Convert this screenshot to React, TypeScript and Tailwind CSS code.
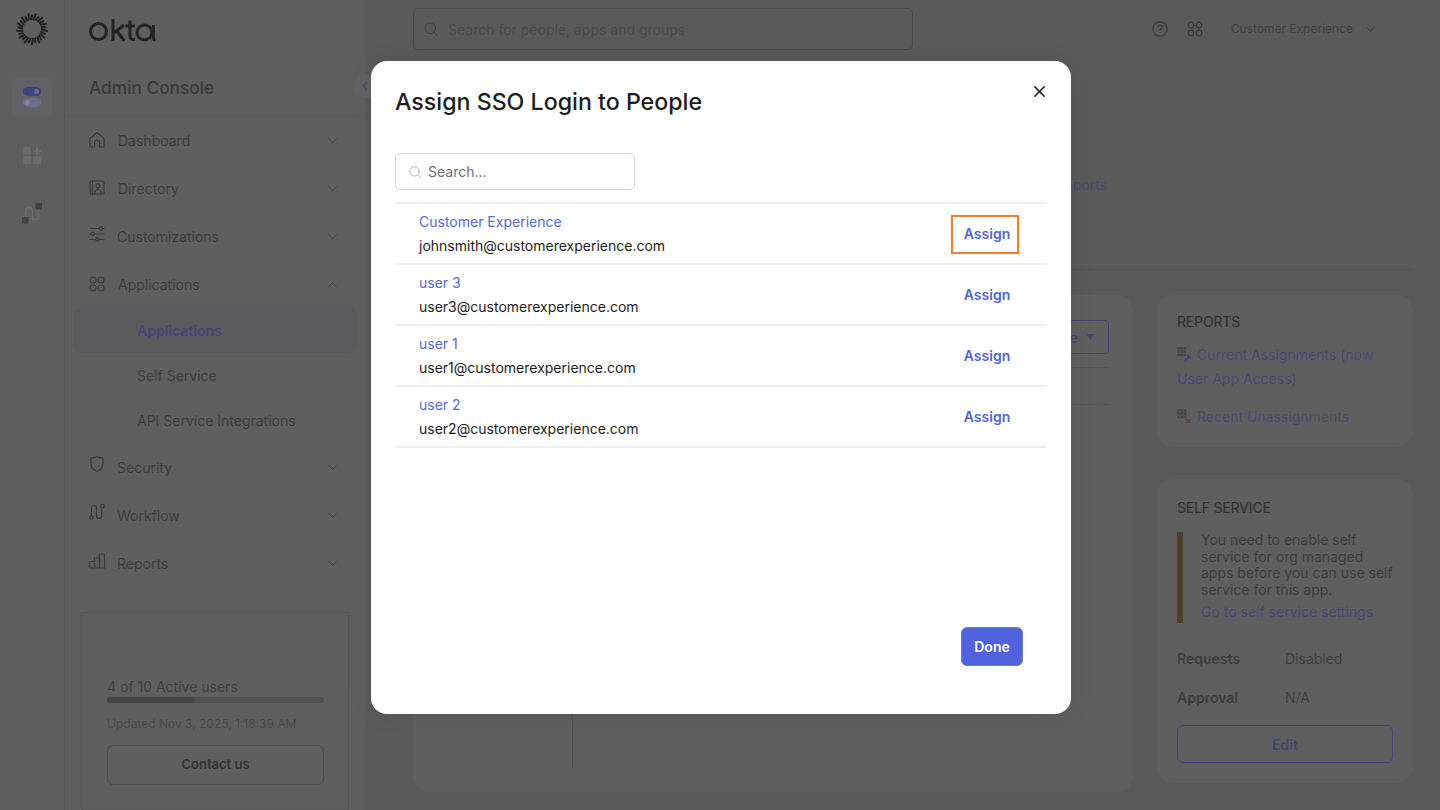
import { ChevronDown, ChevronLeft, ChevronUp, Search, X } from "lucide-react";
import type { ReactNode } from "react";

const ink = "#3a3a3c";

function Glyph({ children, className = "" }: { children: ReactNode; className?: string }) {
    return <svg width="18" height="18" viewBox="0 0 18 18" fill="none" stroke={ink} strokeWidth="1.2" strokeLinecap="round" strokeLinejoin="round" className={"shrink-0 " + className}>{children}</svg>
}

const HomeIcon = () => <Glyph><path d="M2 16V7.500L9 1.500l7 6V16h-4.500v-4.500a2.500 2.500 0 0 0-5 0V16Z" /></Glyph>
const DirectoryIcon = () => <Glyph><rect x="2" y="2" width="14" height="13" rx="1" /><path d="M4.500 2v13" /><circle cx="10" cy="6.800" r="2" /><path d="M6.800 15c0-3 1.500-4.500 3.200-4.500s3.200 1.500 3.200 4.500" /></Glyph>
const SlidersIcon = () => <Glyph className="mb-1"><path d="M2 3.500h9M14.500 3.500H16M2 9h1M6 9h10M2 14.500h6M11 14.500h5" /><circle cx="12.800" cy="3.500" r="1.600" /><circle cx="4.500" cy="9" r="1.600" /><circle cx="9.500" cy="14.500" r="1.600" /></Glyph>
const AppsIcon = () => <Glyph><circle cx="5" cy="5" r="3" /><circle cx="13" cy="5" r="3" /><circle cx="5" cy="13" r="3" /><circle cx="13" cy="13" r="3" /></Glyph>
const ShieldIcon = () => <Glyph className="mb-1.5"><path d="M9 1.500c2 1 4 1.500 6 1.500v6c0 3.500-2.500 6-6 7.500-3.500-1.500-6-4-6-7.500V3c2 0 4-.5 6-1.500Z" /></Glyph>
const WorkflowIcon = () => <Glyph className="mb-1.5"><circle cx="3.500" cy="14.500" r="1.700" /><circle cx="14.500" cy="3" r="1.700" /><path d="M3.500 12.500V5a2.500 2.500 0 0 1 5 0v8a2.500 2.500 0 0 0 5 0V6" /></Glyph>
const BarsIcon = () => <Glyph className="mb-1"><path d="M1.500 9.500h5V16h-5ZM6.500 6h5v10h-5ZM11.500 2h5v14h-5Z" /></Glyph>

function Sunburst() {
    return <svg width="34" height="34" viewBox="0 0 34 34" stroke="#232325" strokeWidth="2" strokeLinecap="butt">
        {Array.from({ length: 26 }, (_, i) => {
            const a = (i * (360 / 26) * Math.PI) / 180;
            const b = a + 0.14;
            const outer = i % 2 === 0 ? 16 : 14.500;
            return <line key={i} x1={17 + 9 * Math.cos(a)} y1={17 + 9 * Math.sin(a)} x2={17 + outer * Math.cos(b)} y2={17 + outer * Math.sin(b)} />
        })}
    </svg>
}

function OktaLogo() {
    return <svg width="68" height="24" viewBox="0 0 68 24" fill="none" stroke="#232325" strokeWidth="3">
        <circle cx="10.500" cy="13.500" r="8" />
        <path d="M25 1v22M36 7l-9.500 7.500M28.500 12.500 36.500 23" />
        <path d="M42 2.500V18c0 3 1.500 3.700 5 3.500M37.500 8h9.500" />
        <circle cx="56.500" cy="14.500" r="7.500" />
        <path d="M65.500 7v13c0 1.500.5 2 2 2" />
    </svg>
}

function NavRow({ icon, label, open = false, wide = false }: { icon: ReactNode; label: string; open?: boolean; wide?: boolean }) {
    return <div className="h-[48px] flex items-center pr-[25px] text-[14px] text-[#3d3d3f]">
        <div className="w-[23px] ml-[23px] flex">{icon}</div>
        <span className={"flex-1 " + (wide ? "pl-[7px]" : "pl-[6px]")}>{label}</span>
        {open ? <ChevronUp size={15} color={ink} strokeWidth={1.400} /> : <ChevronDown size={15} color={ink} strokeWidth={1.400} />}
    </div>
}

function SubRow({ label, active = false }: { label: string; active?: boolean }) {
    return <div className={"h-[45px] mx-[8px] rounded-[8px] flex items-center pl-[64px] text-[14px] " + (active ? "bg-[#5b5b5e] font-semibold text-[#404676]" : "text-[#3d3d3f]")}>
        {label}
    </div>
}

function Sidebar() {
    return <aside className="w-[301px] shrink-0 h-full bg-[#5f5f5f] border-r border-[#5b5b5b] flex flex-col">
        <div className="h-[116px] border-b border-[#5c5c5c] pl-[23px] pt-[18px]">
            <OktaLogo />
            <div className="mt-[34px] ml-[1px] text-[17.300px] leading-[24px] font-medium text-[#39393b]">Admin Console</div>
        </div>
        <NavRow icon={<HomeIcon />} label="Dashboard" wide />
        <NavRow icon={<DirectoryIcon />} label="Directory" wide />
        <NavRow icon={<SlidersIcon />} label="Customizations" />
        <NavRow icon={<AppsIcon />} label="Applications" open wide />
        <div className="h-[135px]">
            <SubRow label="Applications" active />
            <SubRow label="Self Service" />
            <SubRow label="API Service Integrations" />
        </div>
        <NavRow icon={<ShieldIcon />} label="Security" />
        <NavRow icon={<WorkflowIcon />} label="Workflow" />
        <NavRow icon={<BarsIcon />} label="Reports" />
        <div className="mt-[25px] ml-[16px] w-[268px] flex-1 border border-[#575757] pl-[25px] pr-[24px] pt-[65px] text-[#3f3f41]">
            <div className="text-[14px] leading-[18px]">4 of 10 Active users</div>
            <div className="h-[6px] mt-[1px] rounded-full bg-[#515151] overflow-hidden">
                <div className="h-full w-[40%] bg-[#434343]" />
            </div>
            <div className="mt-[13px] text-[12px] leading-[16px] text-[#4a4a4c]">Updated Nov 3, 2025, 1:18:39 AM</div>
            <div className="mt-[13px] h-[40px] rounded-[6px] border border-[#4c4c4c] flex items-center justify-center text-[13px] font-semibold text-[#333335]">Contact us</div>
        </div>
    </aside>
}

function TopBar() {
    return <div className="h-[58px] pt-[8px] flex pr-[35px]">
        <div className="w-[500px] h-[42px] rounded-[5px] border border-[#4a4a4a] flex items-center pl-[9px] gap-[9px]">
            <Search size={16} color="#3f3f41" strokeWidth={1.500} />
            <span className="text-[14px] text-[#4a4a4c]">Search for people, apps and groups</span>
        </div>
        <div className="ml-auto h-[42px] flex items-center text-[12px] text-[#404042]">
            <svg width="18" height="18" viewBox="0 0 18 18" fill="none" stroke={ink} strokeWidth="1.200" strokeLinecap="round">
                <circle cx="9" cy="9" r="7.200" />
                <path d="M6.900 7c.2-1.200 1-1.800 2.100-1.800 1.200 0 2.100.8 2.100 1.800 0 1.500-2.100 1.500-2.100 3.200" />
                <path d="M9 12.600v.2" />
            </svg>
            <svg width="16" height="16" viewBox="0 0 16 16" fill="none" stroke={ink} strokeWidth="1.200" className="ml-[18px]">
                <circle cx="4" cy="4" r="2.800" /><circle cx="12" cy="4" r="2.800" /><circle cx="4" cy="12" r="2.800" /><circle cx="12" cy="12" r="2.800" />
            </svg>
            <span className="ml-[28px]">Customer Experience</span>
            <ChevronDown size={15} color={ink} strokeWidth={1.600} className="ml-[10px]" />
        </div>
    </div>
}

function ReportIcon({ bad = false }: { bad?: boolean }) {
    return <svg width="15" height="15" viewBox="0 0 15 15" className="inline-block mr-[5px] -mt-[3px]">
        {[0, 1, 2].map(r => [0, 1, 2].map(c => <rect key={r + "-" + c} x={c * 3.300} y={r * 3.300} width="2.700" height="2.600" fill="#444446" />))}
        {bad
            ? <path d="M9.500 10l4 4M13.500 10l-4 4" stroke="#6e3a34" strokeWidth="1.400" />
            : <path d="M7.500 14.500l4.500-4.500M11 7.500a2.500 2.500 0 0 0 3 3" fill="none" stroke="#40466f" strokeWidth="2.200" />}
    </svg>
}

function RightColumn() {
    return <div className="w-[256px] shrink-0 flex flex-col gap-[32px] text-[14px] text-[#3d3d3f]">
        <div className="h-[152px] rounded-[16px] bg-[#5f5f5f] px-[20px] pt-[18px]">
            <div className="leading-[18px] font-medium tracking-[-0.2px] text-[#343436]">REPORTS</div>
            <div className="mt-[12px] leading-[24px] text-[#454a74]"><ReportIcon />Current Assignments (now User App Access)</div>
            <div className="mt-[14px] leading-[24px] text-[#454a74]"><ReportIcon bad />Recent Unassignments</div>
        </div>
        <div className="h-[304px] rounded-[16px] bg-[#5f5f5f] px-[20px] pt-[20px]">
            <div className="leading-[18px] font-medium tracking-[-0.2px] text-[#343436]">SELF SERVICE</div>
            <div className="mt-[15px] h-[91px] border-l-[6px] border-[#4d4029] pl-[18px]">
                <div className="leading-[16.700px]">You need to enable self service for org managed apps before you can use self service for this app.</div>
                <div className="mt-[4px] leading-[18px] text-[#454a74]">Go to self service settings</div>
            </div>
            <div className="mt-[27px] flex leading-[18px]"><span className="w-[108px] font-semibold">Requests</span><span>Disabled</span></div>
            <div className="mt-[21px] flex leading-[18px]"><span className="w-[108px] font-semibold">Approval</span><span>N/A</span></div>
            <div className="mt-[18px] w-[216px] h-[38px] rounded-[6px] border border-[#3f4675] flex items-center justify-center font-semibold text-[#41466f]">Edit</div>
        </div>
    </div>
}

function MainPanel() {
    return <div className="h-[497px] w-[720px] shrink-0 rounded-[16px] bg-[#5f5f5f] flex flex-col pb-[24px]">
        <div className="h-[59px] pt-[25px] px-[24px] flex justify-end shrink-0">
            <div className="h-[34px] pl-[10px] pr-[14px] rounded-[4px] border border-[#3f4675] flex items-center gap-[8px] text-[14px] text-[#41466f]">
                Manage <span className="text-[8px]">▼</span>
            </div>
        </div>
        <div className="mx-[24px] mt-[13px] h-[38px] border-y border-[#565656] shrink-0" />
        <div className="flex-1 flex"><div className="w-[160px] border-r border-[#4f4f4f]" /></div>
    </div>
}

function Modal() {
    const people = [
        { name: "Customer Experience", email: "johnsmith@customerexperience.com", focused: true },
        { name: "user 3", email: "user3@customerexperience.com" },
        { name: "user 1", email: "user1@customerexperience.com" },
        { name: "user 2", email: "user2@customerexperience.com" },
    ];

    return <div className="absolute inset-0 flex items-start justify-center pl-[2px] pt-[61px]">
        <div className="w-[700px] h-[653px] rounded-[16px] bg-white shadow-[0_0_24px_rgba(0,0,0,0.08)] flex flex-col px-[24px]">
            <div className="h-[92px] shrink-0 flex items-start justify-between">
                <h2 className="mt-[25px] text-[23.200px] leading-[32px] font-medium text-[#1d1d21]">Assign SSO Login to People</h2>
                <X size={19} color="#1d1d21" strokeWidth={2} className="mt-[21px] mr-[-2px]" />
            </div>
            <div className="w-[240px] h-[37px] rounded-[5px] border border-[#d4d4d8] flex items-center pl-[12px] gap-[6px] shrink-0">
                <Search size={14} color="#a8a8ae" strokeWidth={1.500} />
                <span className="text-[14px] text-[#6e6e78]">Search...</span>
            </div>
            <div className="mt-[12px] w-[652px] border-t-2 border-[#eeeeef]">
                {people.map(p => <div key={p.name} className="h-[61px] border-b-2 border-[#eeeeef] flex items-center pl-[24px] pr-[28px]">
                    <div className="flex-1 text-[14px] leading-[24px]">
                        <div className="text-[#5468e0]">{p.name}</div>
                        <div className="text-[#1d1d21]">{p.email}</div>
                    </div>
                    <div className={"w-[68px] h-[39px] mt-[2px] pb-[2px] pl-[4px] flex items-center justify-center text-[14px] font-semibold text-[#5063dc] " + (p.focused ? "border-2 border-[#f57c1f]" : "")}>Assign</div>
                </div>)}
            </div>
            <div className="mt-auto mb-[48px] flex justify-end pr-[24px]">
                <button className="w-[62px] h-[39px] rounded-[6px] bg-[#5063dc] border border-[#6a7ae2] text-[14px] font-semibold text-white">Done</button>
            </div>
        </div>
    </div>
}

export default function App() {
    return <div className="relative h-[810px] w-[1440px] overflow-hidden bg-[#5a5a5a] flex font-['Inter',sans-serif]">
        <nav className="w-[65px] shrink-0 h-full bg-[#5f5f5f] border-r border-[#575757] flex flex-col items-center">
            <div className="mt-[12px]"><Sunburst /></div>
            <div className="mt-[31px] w-[40px] h-[39px] rounded-[6px] bg-[#626266] flex flex-col items-center justify-center gap-[2px]">
                <div className="w-[18px] h-[9px] rounded-full bg-[#3d4683] flex items-center justify-end pr-[2px]"><div className="w-[5px] h-[5px] rounded-full bg-[#6f7080]" /></div>
                <div className="w-[18px] h-[9px] rounded-full bg-[#6b6e8f] flex items-center pl-[2px]"><div className="w-[5px] h-[5px] rounded-full bg-[#85858b]" /></div>
            </div>
            <svg width="20" height="20" viewBox="0 0 20 20" className="mt-[29px]" fill="#6c6c6c">
                <rect x="1" y="1.500" width="8" height="8" rx="1.500" />
                <rect x="1" y="11" width="8" height="8" rx="1.500" />
                <rect x="11" y="11" width="8" height="8" rx="1.500" />
                <path d="M14 2h2v3h3v2h-3v3h-2V7h-3V5h3Z" />
            </svg>
            <svg width="22" height="22" viewBox="0 0 22 22" className="mt-[37px]" fill="none">
                <path d="M5 15V8.500a3.200 3.200 0 0 1 6.400 0v6a3.200 3.200 0 0 0 6.400 0V7" stroke="#6c6c6c" strokeWidth="1.400" />
                <rect x="14.500" y="1" width="6.500" height="6.500" rx="1" fill="#434343" />
                <rect x="1" y="15" width="6.500" height="6.500" rx="1" fill="#434343" />
            </svg>
        </nav>
        <Sidebar />
        <main className="flex-1 pl-[47px] pr-[27px]">
            <TopBar />
            <div className="h-[212px] w-[1000px] border-b border-[#545454] pt-[118px] pr-[306px] flex justify-end">
                <span className="text-[14px] leading-[18px] text-[#454a74]">View Logs Reports</span>
            </div>
            <div className="mt-[25px] flex gap-[24px]">
                <MainPanel />
                <RightColumn />
            </div>
        </main>
        <div className="absolute left-[353px] top-[74px] w-[24px] h-[24px] rounded-full bg-[#636363] flex items-center justify-center">
            <ChevronLeft size={14} color="#43497f" strokeWidth={1.800} className="-ml-[1px]" />
        </div>
        <Modal />
    </div>
}
